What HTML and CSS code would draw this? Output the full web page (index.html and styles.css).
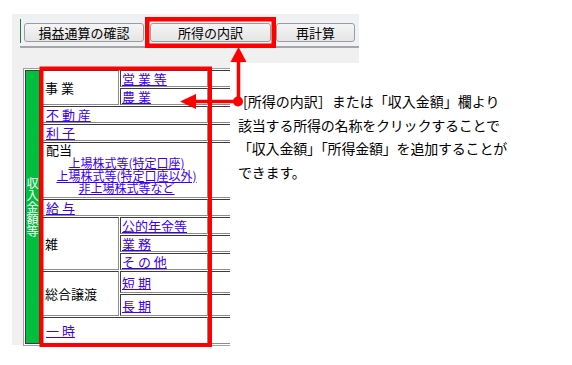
FILE: index.html
```html
<!DOCTYPE html>
<html lang="ja">
<head>
<meta charset="utf-8">
<title>所得の内訳</title>
<link rel="stylesheet" href="styles.css">
</head>
<body>
<div class="app">
  <div class="toolbar">
    <div class="btnbar">
      <div class="btnrow">
        <button class="btn b1">損益通算の確認</button>
        <button class="btn b2">所得の内訳</button>
        <button class="btn b3">再計算</button>
      </div>
    </div>
  </div>
  <div class="lower">
    <div class="clip">
      <div class="income">
        <div class="c green"><span class="vtext">収入金額等</span></div>

        <div class="c lab r1-2">事 業</div>
        <div class="c sub r1"><a href="#">営 業 等</a></div>
        <div class="c val r1"></div>
        <div class="c sub r2"><a href="#">農 業</a></div>
        <div class="c val r2"></div>

        <div class="c wide r3"><a href="#">不 動 産</a></div>
        <div class="c val r3"></div>

        <div class="c wide r4"><a href="#">利 子</a></div>
        <div class="c val r4"></div>

        <div class="c wide haito r5">
          <div class="haito-t">配当</div>
          <div class="haito-links">
            <div><a href="#">上場株式等(特定口座)</a></div>
            <div><a href="#">上場株式等(特定口座以外)</a></div>
            <div><a href="#">非上場株式等など</a></div>
          </div>
        </div>
        <div class="c val r5"></div>

        <div class="c wide r6"><a href="#">給 与</a></div>
        <div class="c val r6"></div>

        <div class="c lab r7-9">雑</div>
        <div class="c sub r7"><a href="#">公的年金等</a></div>
        <div class="c val r7"></div>
        <div class="c sub r8"><a href="#">業 務</a></div>
        <div class="c val r8"></div>
        <div class="c sub r9"><a href="#">そ の 他</a></div>
        <div class="c val r9"></div>

        <div class="c lab r10-11">総合譲渡</div>
        <div class="c sub r10"><a href="#">短 期</a></div>
        <div class="c val r10"></div>
        <div class="c sub r11"><a href="#">長 期</a></div>
        <div class="c val r11"></div>

        <div class="c wide r12"><a href="#">一 時</a></div>
        <div class="c val r12"></div>
      </div>
    </div>
  </div>
</div>

<div class="callout">
  <div class="l1">[所得の内訳］または「収入金額」欄より</div>
  <div>該当する所得の名称をクリックすることで</div>
  <div>「収入金額」「所得金額」を追加することが</div>
  <div>できます。</div>
</div>

<svg class="marks" width="572" height="365" viewBox="0 0 572 365">
  <rect x="147.25" y="19.25" width="126.5" height="26.5" fill="none" stroke="#ff0000" stroke-width="4.5"/>
  <rect x="41.5" y="68.5" width="168.5" height="276.5" fill="none" stroke="#ff0000" stroke-width="4"/>
  <line x1="238.5" y1="101.5" x2="238.5" y2="58" stroke="#ff0000" stroke-width="3.5"/>
  <polygon points="238.5,47 230.5,62 246.5,62" fill="#ff0000"/>
  <line x1="238" y1="101.5" x2="193" y2="101.5" stroke="#ff0000" stroke-width="3.5"/>
  <polygon points="180,101.5 196,94 196,109" fill="#ff0000"/>
  <circle cx="238" cy="101.5" r="5" fill="#ff0000"/>
</svg>
</body>
</html>
```

FILE: styles.css
```css
html, body {
  margin: 0;
  padding: 0;
}
body {
  width: 572px;
  height: 365px;
  position: relative;
  overflow: hidden;
  background: #ffffff;
  font-family: "Noto Sans CJK JP", "Noto Sans", sans-serif;
  color: #000;
}

.app {
  margin: 14px 0 0 12px;
  width: 347px;
}

/* ---------- toolbar ---------- */
.toolbar {
  box-sizing: border-box;
  height: 49px;
  background: #f0f0f0;
  padding: 5px 0 0 8px;
}
.btnbar {
  background: #eef2f6;
  border-bottom: 2px solid #a6a6a6;
  padding-bottom: 3px;
}
.btnrow {
  display: flex;
  border-left: 1px solid #1d7a40;
  padding: 4px 0 1px 3px;
}
.btn {
  box-sizing: border-box;
  height: 19px;
  padding: 0;
  margin: 0;
  border: 1px solid #9c9c9c;
  border-radius: 3px;
  background: linear-gradient(#f5f5f5, #e5e5e5);
  font-family: "Noto Sans CJK JP", sans-serif;
  font-size: 13px;
  line-height: 17px;
  color: #000;
  text-align: center;
}
.b1 { width: 120px; }
.b2 { width: 121px; margin-left: 6px; }
.b3 { width: 79px; margin-left: 5px; }

/* ---------- lower panel ---------- */
.lower {
  box-sizing: border-box;
  width: 218px;
  height: 282px;
  background: #f0f0f0;
  padding: 5px 0 0 11px;
}
.clip {
  width: 207px;
  overflow: hidden;
}
.income {
  display: grid;
  width: 260px;
  border: 1px solid #a0a0a0;
  padding: 1px;
  gap: 1px;
  background: #ffffff;
  grid-template-columns: 15px 78px 88px 1fr;
  grid-template-rows: 17px 17px 17px 17px 56px 17px 17px 17px 17px 22px 22px 27px;
}
.c {
  box-sizing: border-box;
  border: 1px solid;
  border-color: #3c3c3c #8c8c8c #8c8c8c #3c3c3c;
  background: #ffffff;
  display: flex;
  align-items: center;
  font-size: 13px;
  line-height: 15px;
  white-space: nowrap;
}
.c a {
  color: #3a00f5;
  text-decoration: underline;
}
.green {
  grid-column: 1;
  grid-row: 1 / 13;
  background: #00bf3f;
  border-color: #3c3c3c;
  justify-content: center;
}
.vtext {
  writing-mode: vertical-rl;
  color: #ffffff;
  font-size: 12px;
  line-height: 13px;
}
.lab { grid-column: 2; padding-left: 3px; }
.sub { grid-column: 3; padding-left: 1px; }
.wide { grid-column: 2 / 4; padding-left: 4px; }
.val { grid-column: 4; }

.r1-2 { grid-row: 1 / 3; }
.r7-9 { grid-row: 7 / 10; }
.r10-11 { grid-row: 10 / 12; }
.r1 { grid-row: 1; }
.r2 { grid-row: 2; }
.r3 { grid-row: 3; }
.r4 { grid-row: 4; }
.r5 { grid-row: 5; }
.r6 { grid-row: 6; }
.r7 { grid-row: 7; }
.r8 { grid-row: 8; }
.r9 { grid-row: 9; }
.r10 { grid-row: 10; }
.r11 { grid-row: 11; }
.r12 { grid-row: 12; }

.haito {
  display: block;
  padding-left: 4px;
}
.haito-t {
  font-size: 13px;
  line-height: 14px;
}
.haito-links {
  text-align: center;
  font-size: 12px;
  line-height: 12.5px;
}

/* ---------- annotation ---------- */
.callout {
  position: absolute;
  left: 238px;
  top: 90px;
  font-size: 14px;
  line-height: 23.5px;
  letter-spacing: -0.2px;
  white-space: nowrap;
  color: #000;
}
.callout .l1 {
  text-indent: 5px;
  letter-spacing: 0;
}
.marks {
  position: absolute;
  left: 0;
  top: 0;
  pointer-events: none;
}
```
